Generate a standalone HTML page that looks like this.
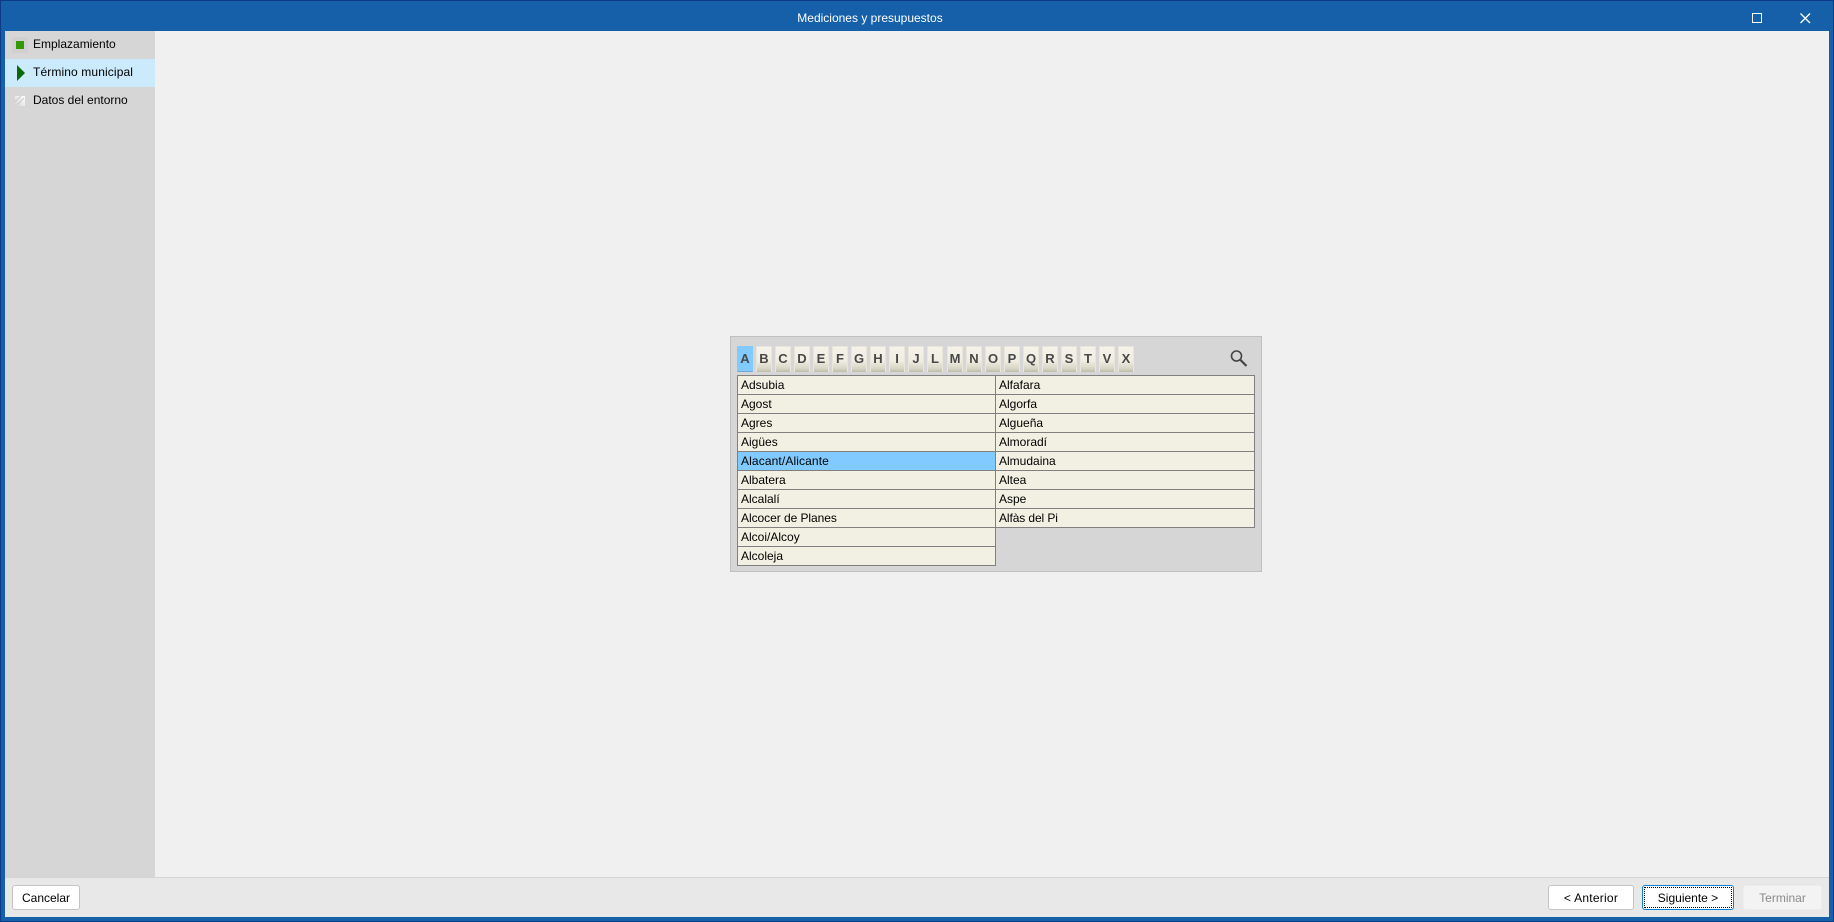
<!DOCTYPE html>
<html lang="es"><head><meta charset="utf-8"><title>Mediciones y presupuestos</title>
<style>
*{box-sizing:border-box}
html,body{margin:0;padding:0;width:1834px;height:922px;overflow:hidden;background:#1560a9;font-family:"Liberation Sans",Arial,sans-serif;font-size:12px;color:#000}
.a{position:absolute}
#frame{position:absolute;left:0;top:0;width:1834px;height:922px;border:1px solid #0b3a86;pointer-events:none}
#title{left:0;top:10px;width:1740px;text-align:center;color:#fff;line-height:17px}
#main{left:155px;top:31px;width:1674px;height:846px;background:#f0f0f0}
#side{left:5px;top:31px;width:150px;height:846px;background:#d6d6d6}
.it{position:absolute;left:33px;line-height:16px;font-size:12px;white-space:nowrap}
#bar{left:5px;top:877px;width:1824px;height:40px;background:#e8e8e8;border-top:1px solid #d4d4d4}
.btn{position:absolute;top:885px;height:25px;background:#fff;border:1px solid #c4c4c4;border-radius:3px;text-align:center;line-height:25px;font-size:12px}
#panel{left:730px;top:336px;width:532px;height:236px;background:#d6d6d6;border:1px solid #c0c0c0}
.l{position:absolute;top:346px;width:16px;height:26px;background:linear-gradient(#f5f3e9 0,#f0eee2 55%,#d8d6c6 85%,#bfbdab 100%);border:1px solid #e8e6da;border-bottom:0;text-align:center;font-weight:bold;font-size:13px;line-height:24px;color:#484848}
.l.on{background:#80caff;border:1px solid #80caff;border-bottom:1px solid #6aa8d8}
.r{position:absolute;height:20px;background:#f1f0e2;border:1px solid #808080;line-height:18px;padding-left:3px;font-size:12px;white-space:nowrap}
.c1{left:737px;width:259px}.c2{left:995px;width:260px}
.r.on{background:#80caff}
</style></head><body>
<div class="a" id="title">Mediciones y presupuestos</div>
<svg class="a" style="left:1740px;top:0" width="94" height="31"><rect x="12.5" y="13.5" width="9" height="9" fill="none" stroke="#fff" stroke-width="1"/><path d="M60.5 13.5L70 23M70 13.5L60.5 23" stroke="#fff" stroke-width="1.3" fill="none"/></svg>
<div class="a" id="side"></div>
<div class="a" id="main"></div>
<div class="a" style="left:5px;top:59px;width:150px;height:28px;background:#cbeafb"></div>
<div class="a" style="left:12px;top:37px;width:16px;height:16px;background:#d0d0d0"></div>
<div class="a" style="left:16px;top:41px;width:8px;height:8px;background:#339900"></div>
<svg class="a" style="left:12px;top:62px" width="16" height="22"><path d="M5 3L13 11L5 19Z" fill="#0a6a0a"/></svg>
<svg class="a" style="left:14px;top:95px" width="12" height="12"><defs><linearGradient id="g" x1="1" y1="0" x2="0" y2="1"><stop offset="0" stop-color="#fff"/><stop offset="1" stop-color="#d6d6d6"/></linearGradient></defs><rect x="1" y="1" width="10" height="10" fill="url(#g)"/><path d="M1 7L7 1M3 10L10 3" stroke="#c8c8c8" stroke-width="1"/></svg>
<div class="it" style="top:36px">Emplazamiento</div>
<div class="it" style="top:64px;letter-spacing:.12px">Término municipal</div>
<div class="it" style="top:92px">Datos del entorno</div>
<div class="a" id="bar"></div>
<div class="btn" style="left:12px;width:68px">Cancelar</div>
<div class="btn" style="left:1548px;width:86px;letter-spacing:.25px">&lt; Anterior</div>
<div class="btn" style="left:1642px;width:92px;border:1px solid #0f7fd6"><div style="position:absolute;left:1px;top:1px;right:1px;bottom:1px;border:1px dotted #000;line-height:21px">Siguiente &gt;</div></div>
<div class="btn" style="left:1743px;width:79px;background:#f3f3f3;border-color:#ededed;color:#8a8a8a">Terminar</div>
<div class="a" id="panel"></div>
<div class="l on" style="left:737px">A</div><div class="l" style="left:756px">B</div><div class="l" style="left:775px">C</div><div class="l" style="left:794px">D</div><div class="l" style="left:813px">E</div><div class="l" style="left:832px">F</div><div class="l" style="left:851px">G</div><div class="l" style="left:870px">H</div><div class="l" style="left:889px">I</div><div class="l" style="left:908px">J</div><div class="l" style="left:927px">L</div><div class="l" style="left:947px">M</div><div class="l" style="left:966px">N</div><div class="l" style="left:985px">O</div><div class="l" style="left:1004px">P</div><div class="l" style="left:1023px">Q</div><div class="l" style="left:1042px">R</div><div class="l" style="left:1061px">S</div><div class="l" style="left:1080px">T</div><div class="l" style="left:1099px">V</div><div class="l" style="left:1118px">X</div>
<svg class="a" style="left:1225px;top:345px" width="30" height="30"><circle cx="11.5" cy="11" r="5" fill="none" stroke="#444" stroke-width="1.6"/><path d="M15.5 15L21.5 21" stroke="#444" stroke-width="2.2"/></svg>
<div class="r c1" style="top:375px">Adsubia</div>
<div class="r c1" style="top:394px">Agost</div>
<div class="r c1" style="top:413px">Agres</div>
<div class="r c1" style="top:432px">Aigües</div>
<div class="r c1 on" style="top:451px;letter-spacing:.12px">Alacant/Alicante</div>
<div class="r c1" style="top:470px">Albatera</div>
<div class="r c1" style="top:489px">Alcalalí</div>
<div class="r c1" style="top:508px;letter-spacing:-.05px">Alcocer de Planes</div>
<div class="r c1" style="top:527px">Alcoi/Alcoy</div>
<div class="r c1" style="top:546px">Alcoleja</div>
<div class="r c2" style="top:375px">Alfafara</div>
<div class="r c2" style="top:394px">Algorfa</div>
<div class="r c2" style="top:413px">Algueña</div>
<div class="r c2" style="top:432px">Almoradí</div>
<div class="r c2" style="top:451px">Almudaina</div>
<div class="r c2" style="top:470px">Altea</div>
<div class="r c2" style="top:489px">Aspe</div>
<div class="r c2" style="top:508px;letter-spacing:-.1px">Alfàs del Pi</div>
<div id="frame"></div>
</body></html>
